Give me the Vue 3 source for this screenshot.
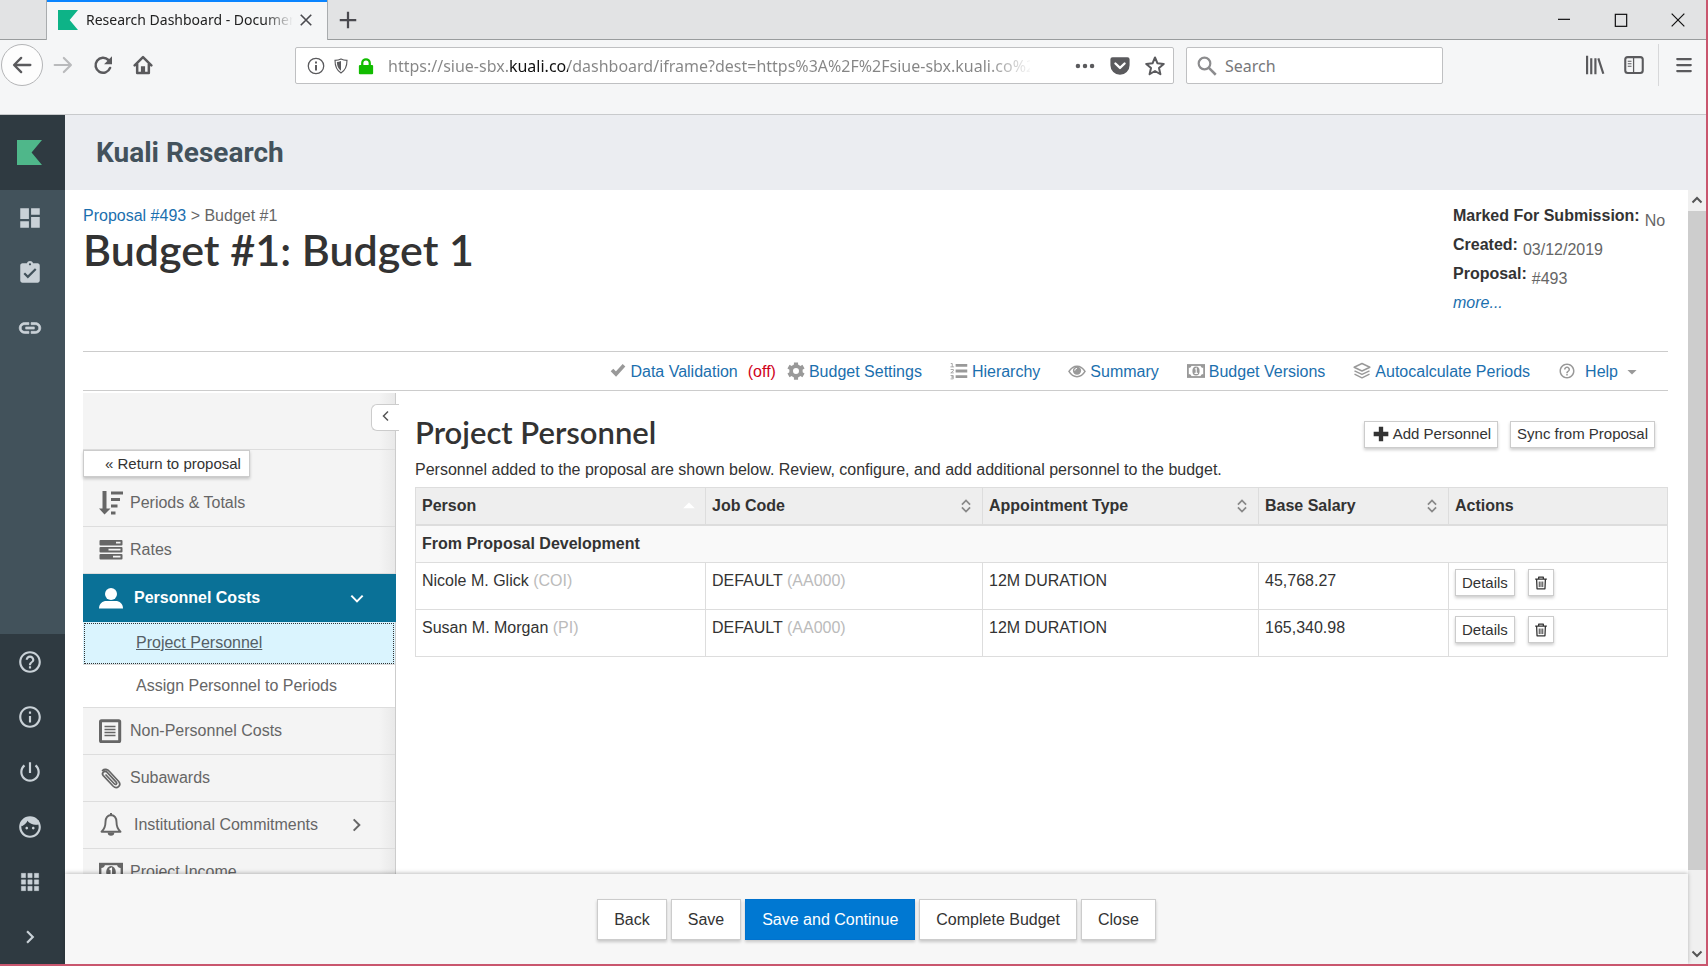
<script setup>
import { h, ref } from "vue";

const shapes = {
  // rail
  dashboard: `<path d="M3 13h8V3H3v10zm0 8h8v-6H3v6zm10 0h8V11h-8v10zm0-18v6h8V3h-8z"/>`,
  tasks: `<path d="M19 3h-4.18C14.4 1.84 13.3 1 12 1c-1.3 0-2.4.84-2.82 2H5c-1.1 0-2 .9-2 2v14c0 1.1.9 2 2 2h14c1.1 0 2-.9 2-2V5c0-1.1-.9-2-2-2zm-7 0c.55 0 1 .45 1 1s-.45 1-1 1-1-.45-1-1 .45-1 1-1zm-2 14l-4-4 1.41-1.41L10 14.17l6.59-6.59L18 9l-8 8z"/>`,
  link: `<path d="M3.9 12c0-1.71 1.39-3.1 3.1-3.1h4V7H7c-2.76 0-5 2.24-5 5s2.24 5 5 5h4v-1.9H7c-1.71 0-3.1-1.39-3.1-3.1zM8 13h8v-2H8v2zm9-6h-4v1.9h4c1.71 0 3.1 1.39 3.1 3.1s-1.39 3.1-3.1 3.1h-4V17h4c2.76 0 5-2.24 5-5s-2.24-5-5-5z" stroke="currentColor" stroke-width=".6"/>`,
  help: `<path d="M11 18h2v-2h-2v2zm1-16C6.48 2 2 6.48 2 12s4.48 10 10 10 10-4.48 10-10S17.52 2 12 2zm0 18c-4.41 0-8-3.59-8-8s3.59-8 8-8 8 3.59 8 8-3.59 8-8 8zm0-14c-2.21 0-4 1.79-4 4h2c0-1.1.9-2 2-2s2 .9 2 2c0 2-3 1.75-3 5h2c0-2.25 3-2.5 3-5 0-2.21-1.79-4-4-4z"/>`,
  info: `<path d="M11 17h2v-6h-2v6zm1-15C6.48 2 2 6.48 2 12s4.48 10 10 10 10-4.48 10-10S17.52 2 12 2zm0 18c-4.41 0-8-3.59-8-8s3.59-8 8-8 8 3.59 8 8-3.59 8-8 8zM11 9h2V7h-2v2z"/>`,
  power: `<path d="M13 3h-2v10h2V3zm4.83 2.17l-1.42 1.42C17.99 7.86 19 9.81 19 12c0 3.87-3.13 7-7 7s-7-3.13-7-7c0-2.19 1.01-4.14 2.58-5.42L6.17 5.17C4.23 6.82 3 9.26 3 12c0 4.97 4.03 9 9 9s9-4.03 9-9c0-2.74-1.23-5.18-3.17-6.83z"/>`,
  face: `<path d="M9 11.75c-.69 0-1.25.56-1.25 1.25s.56 1.25 1.25 1.25 1.25-.56 1.25-1.25-.56-1.25-1.25-1.25zm6 0c-.69 0-1.25.56-1.25 1.25s.56 1.25 1.25 1.25 1.25-.56 1.25-1.25-.56-1.25-1.25-1.25zM12 2C6.48 2 2 6.48 2 12s4.48 10 10 10 10-4.48 10-10S17.52 2 12 2zm0 18c-4.41 0-8-3.59-8-8 0-.29.02-.58.05-.86 2.36-1.05 4.23-2.98 5.21-5.37C11.07 8.33 14.05 10 17.42 10c.78 0 1.53-.09 2.25-.26.21.71.33 1.47.33 2.26 0 4.41-3.59 8-8 8z"/><path d="M4.300 10.500C6 9 7.500 7.500 8.500 4.800l2.500-1 9 2-.500 3.500c-4 .700-7-.500-9.500-3.500-1.500 3-3.300 4.400-5.700 5.400z"/>`,
  apps: `<path d="M4 8h4V4H4v4zm6 12h4v-4h-4v4zm-6 0h4v-4H4v4zm0-6h4v-4H4v4zm6 0h4v-4h-4v4zm6-10v4h4V4h-4zm-6 4h4V4h-4v4zm6 6h4v-4h-4v4zm0 6h4v-4h-4v4z" stroke="currentColor" stroke-width=".4"/>`,
  chevronRight: `<path d="M10 6L8.590 7.410 13.170 12l-4.580 4.590L10 18l6-6z"/>`,
  kuali: `<path d="M0 0h24L14 12l10 12H0z"/>`,

  // browser
  back: `<path d="M22 12H3M11 3.500L2.500 12l8.500 8.500" fill="none" stroke="currentColor" stroke-width="2.800" stroke-linecap="round" stroke-linejoin="round"/>`,
  forward: `<path d="M2 12h19M13 3.500l8.500 8.500-8.500 8.500" fill="none" stroke="currentColor" stroke-width="2.600" stroke-linecap="round" stroke-linejoin="round"/>`,
  reload: `<path d="M20.500 15.500A9 9 0 1 1 18.500 6" fill="none" stroke="currentColor" stroke-width="3" stroke-linecap="round"/><path d="M22.800 1.500v9.500h-9.500z"/>`,
  home: `<path d="M2 12.500L12 2.500l10 10M5 11v10.500h14V11" fill="none" stroke="currentColor" stroke-width="3" stroke-linecap="round" stroke-linejoin="round"/><path d="M9.500 21v-7.500h5V21z"/>`,
  infoThin: `<circle cx="12" cy="12" r="10.300" fill="none" stroke="currentColor" stroke-width="1.700"/><path d="M10.700 10.500h2.600V18h-2.600zM10.700 6h2.600v2.600h-2.600z"/>`,
  shield: `<path d="M12 1.500c3 1.500 6 2 9 2 0 9-2 15-9 19-7-4-9-10-9-19 3 0 6-.500 9-2z" fill="none" stroke="currentColor" stroke-width="1.700"/><path d="M12 4.500v14.500C7.500 16 6 12 5.800 6c2.200-.200 4.200-.700 6.200-1.500z"/>`,
  lock: `<path d="M7 11V8a5 5 0 0 1 10 0v3" fill="none" stroke="currentColor" stroke-width="3"/><rect x="2.500" y="10.500" width="19" height="12.500" rx="1.500"/>`,
  dots: `<circle cx="3.500" cy="12" r="2.700"/><circle cx="12" cy="12" r="2.700"/><circle cx="20.500" cy="12" r="2.700"/>`,
  pocket: `<path d="M3 1.500h18a2.500 2.500 0 0 1 2.500 2.500v7a11.500 11.500 0 0 1-23 0V4A2.500 2.500 0 0 1 3 1.500z"/><path d="M6.500 9l5.500 5.300L17.500 9" fill="none" stroke="#fff" stroke-width="2.800" stroke-linecap="round" stroke-linejoin="round"/>`,
  star: `<path d="M12 1.800l3 7 7.500.700-5.700 5 1.700 7.400-6.500-3.900-6.500 3.900 1.700-7.400-5.700-5 7.500-.700z" fill="none" stroke="currentColor" stroke-width="2.400" stroke-linejoin="round"/>`,
  search: `<circle cx="9" cy="9" r="7" fill="none" stroke="currentColor" stroke-width="2.600"/><path d="M14 14l8.500 8.500" stroke="currentColor" stroke-width="3"/>`,
  library: `<path d="M2.500 1v22M7.500 4v19M12.500 4v19M16 4l6 18.500" fill="none" stroke="currentColor" stroke-width="2.600"/>`,
  sidebar: `<rect x="1.500" y="2.500" width="21" height="19" rx="3" fill="none" stroke="currentColor" stroke-width="2.500"/><path d="M11.500 3v18" stroke="currentColor" stroke-width="1.500"/><path d="M4.500 7.500h4.500M4.500 10.500h4.500M4.500 13.500h4.500" stroke="currentColor" stroke-width="1.300"/>`,
  menu: `<path d="M3 4h18M3 12h18M3 20h18" stroke="currentColor" stroke-width="3" stroke-linecap="round"/>`,
  close: `<path d="M3 3l18 18M21 3L3 21" stroke="currentColor" stroke-width="2.800"/>`,
  plusThin: `<path d="M12 1v22M1 12h22" stroke="currentColor" stroke-width="3"/>`,
  winMin: `<path d="M3 11h18" stroke="currentColor" stroke-width="1.800"/>`,
  winMax: `<rect x="3.500" y="3.500" width="17" height="18" fill="none" stroke="currentColor" stroke-width="1.800"/>`,
  winClose: `<path d="M2.500 2.500l19 19M21.500 2.500l-19 19" stroke="currentColor" stroke-width="1.800"/>`,
  up: `<path d="M3 17l9-9 9 9" fill="none" stroke="currentColor" stroke-width="4"/>`,
  down: `<path d="M3 7l9 9 9-9" fill="none" stroke="currentColor" stroke-width="4"/>`,

  // page actions
  check: `<path d="M3 12l6 6L21 5" fill="none" stroke="currentColor" stroke-width="5.500"/>`,
  gear: `<circle cx="12" cy="12" r="6.500" fill="none" stroke="currentColor" stroke-width="5"/><path d="M12 .500v5M12 18.500v5M2 6.200l4.400 2.600M17.600 15.200l4.400 2.600M2 17.800l4.400-2.600M17.600 8.800l4.400-2.600" stroke="currentColor" stroke-width="5.500"/>`,
  list: `<path d="M7.500 4.500H23M7.500 12H23M7.500 19.500H23" stroke="currentColor" stroke-width="3.800"/><path d="M1 2h2v4.500M.500 6.500h5M.800 10h3.700v1.800L1 14.500h4M.800 18h3.500v2H2h2.300v2.500H.800" fill="none" stroke="currentColor" stroke-width="1.100"/>`,
  eye: `<path d="M1.300 12.500C4 8 7.500 5.500 12 5.500s8 2.500 10.700 7C20 17 16.500 19.500 12 19.500s-8-2.500-10.700-7z" fill="none" stroke="currentColor" stroke-width="2"/><circle cx="12" cy="11.500" r="5.500"/><path d="M9 11.500a3 3 0 0 1 3-3" fill="none" stroke="#fff" stroke-width="1.300"/>`,
  money: `<rect x="1.200" y="4" width="21.600" height="16" fill="none" stroke="currentColor" stroke-width="2.400"/><path d="M1 4h5a4 4 0 0 1-4 4zM23 4h-5a4 4 0 0 0 4 4zM1 20h5a4 4 0 0 0-4-4zM23 20h-5a4 4 0 0 1 4-4z"/><ellipse cx="12" cy="12" rx="4.800" ry="6"/><path d="M10.500 9.500l1.800-1v6.500M10 15.200h4.500" fill="none" stroke="#fff" stroke-width="1.500"/>`,
  layers: `<path d="M12 2l10.500 5L12 12 1.500 7zM2 11.800l10 4.800 10-4.800M2 16.300l10 4.800 10-4.800" fill="none" stroke="currentColor" stroke-width="1.900" stroke-linejoin="round"/>`,
  caret: `<path d="M1 7h22L12 18z"/>`,
  plus: `<path d="M12 1v22M1 12h22" stroke="currentColor" stroke-width="6.500"/>`,
  trash: `<path d="M2 5.500h20M8 5V2h8v3M4.500 6l.700 16h13.600l.700-16" fill="none" stroke="currentColor" stroke-width="2.200" stroke-linejoin="round"/><path d="M9 9.500v9.500M12 9.500v9.500M15 9.500v9.500" stroke="currentColor" stroke-width="1.600"/>`,
  sort: `<path d="M5 9.500L12 2.500l7 7M5 14.500l7 7 7-7" fill="none" stroke="currentColor" stroke-width="3"/>`,
  sortUp: `<path d="M2 16h20L12 6z"/>`,

  // budget menu
  periods: `<path d="M3.500 0h4v17.500h4L5.500 23.500l-5.500-6h3.500zM12 .500h12v3H12zM12 7h9v3h-9zM12 13.500h6.500v3H12zM12 20.500h4.500v3H12z"/>`,
  rates: `<path d="M1.500 2h21a1 1 0 0 1 1 1v3.500a1 1 0 0 1-1 1h-21a1 1 0 0 1-1-1V3a1 1 0 0 1 1-1zM1.500 9h21a1 1 0 0 1 1 1v3.500a1 1 0 0 1-1 1h-21a1 1 0 0 1-1-1V10a1 1 0 0 1 1-1zM1.500 16h21a1 1 0 0 1 1 1v3.500a1 1 0 0 1-1 1h-21a1 1 0 0 1-1-1V17a1 1 0 0 1 1-1z"/><path d="M17 4.700h4.500M9.500 11.700h12M14 18.700h7.500" stroke="#f4f4f4" stroke-width="1.700"/>`,
  person: `<circle cx="12" cy="8" r="6"/><path d="M0 22.500c0-5 3.500-7.500 7.500-7.500h9c4 0 7.500 2.500 7.500 7.500z"/>`,
  document: `<rect x="1.500" y="1.800" width="19.200" height="20.900" rx="1" fill="none" stroke="currentColor" stroke-width="3"/><path d="M5.500 7.500h11M5.500 10.500h11M5.500 13.500h11M5.500 16.500h11" stroke="currentColor" stroke-width="1.600"/>`,
  clip: `<path d="M7 9l8.500 9c1.200 1.200 3-.400 1.900-1.700L8 6.200C5.600 3.800 2 7 4.300 9.600l9.700 10.400c4 3.800 9-.800 5.500-4.800L10.500 5.500C8.500 3.300 5.500 2.500 3.500 4.500" fill="none" stroke="currentColor" stroke-width="1.700" stroke-linecap="round"/>`,
  bell: `<path d="M12 2c-4 .5-5.500 3.500-5.500 7 0 5-1.500 7.500-4 9.700h19c-2.500-2.200-4-4.700-4-9.700 0-3.500-1.500-6.500-5.500-7z" fill="none" stroke="currentColor" stroke-width="1.900" stroke-linejoin="round"/><path d="M11 0h2v3h-2zM8.700 19.500h6.600a3.300 3.300 0 0 1-6.600 0z"/>`,
  open: `<path d="M3.500 8.500L12 17l8.500-8.500" fill="none" stroke="currentColor" stroke-width="3"/>`,
  closed: `<path d="M7 3.500l8.500 8.500L7 20.500" fill="none" stroke="currentColor" stroke-width="3"/>`,
  collapse: `<path d="M16 3l-9 9 9 9" fill="none" stroke="currentColor" stroke-width="3"/>`,
};

const Icon = (props) =>
  h("svg", {
    class: "icon",
    viewBox: "0 0 24 24",
    fill: "currentColor",
    "aria-hidden": "true",
    innerHTML: shapes[props.name],
  });
Icon.props = ["name"];

const url = ref(
  "https://siue-sbx.kuali.co/dashboard/iframe?dest=https%3A%2F%2Fsiue-sbx.kuali.co%2Fkc"
);
const search = ref("");

const railTop = [
  { icon: "dashboard", label: "Dashboard" },
  { icon: "tasks", label: "Action list" },
  { icon: "link", label: "Links" },
];
const railBottom = [
  { icon: "help", label: "Help" },
  { icon: "info", label: "About" },
  { icon: "power", label: "Sign out" },
  { icon: "face", label: "Profile" },
  { icon: "apps", label: "Apps" },
  { icon: "chevronRight", label: "Expand" },
];

const details = [
  { label: "Marked For Submission:", value: "No" },
  { label: "Created:", value: "03/12/2019" },
  { label: "Proposal:", value: "#493" },
];

const actions = [
  { icon: "gear", label: "Budget Settings" },
  { icon: "list", label: "Hierarchy" },
  { icon: "eye", label: "Summary" },
  { icon: "money", label: "Budget Versions" },
  { icon: "layers", label: "Autocalculate Periods" },
];

const menu = [
  { icon: "periods", label: "Periods & Totals" },
  { icon: "rates", label: "Rates" },
  {
    icon: "person",
    label: "Personnel Costs",
    active: true,
    arrow: "open",
    children: ["Project Personnel", "Assign Personnel to Periods"],
  },
  { icon: "document", label: "Non-Personnel Costs" },
  { icon: "clip", label: "Subawards" },
  { icon: "bell", label: "Institutional Commitments", arrow: "closed" },
  { icon: "money", label: "Project Income" },
];
const activeChild = ref("Project Personnel");

const columns = [
  { label: "Person", sort: "sortUp" },
  { label: "Job Code", sort: "sort" },
  { label: "Appointment Type", sort: "sort" },
  { label: "Base Salary", sort: "sort" },
  { label: "Actions" },
];
const people = [
  { name: "Nicole M. Glick", role: "(COI)", salary: "45,768.27" },
  { name: "Susan M. Morgan", role: "(PI)", salary: "165,340.98" },
];

const footer = ["Back", "Save", "Save and Continue", "Complete Budget", "Close"];
</script>

<template>
  <div class="window">
    <div class="tabstrip">
      <div class="tab">
        <Icon name="kuali" class="tab__logo" />
        <span class="tab__title">Research Dashboard - Document</span>
        <button class="plain" aria-label="Close tab"><Icon name="close" class="i-14" /></button>
      </div>
      <button class="plain tabstrip__new" aria-label="New tab"><Icon name="plusThin" class="i-18" /></button>
      <div class="tabstrip__window">
        <button class="plain" aria-label="Minimize"><Icon name="winMin" class="i-16" /></button>
        <button class="plain" aria-label="Maximize"><Icon name="winMax" class="i-16" /></button>
        <button class="plain" aria-label="Close"><Icon name="winClose" class="i-16" /></button>
      </div>
    </div>

    <div class="toolbar">
      <button class="plain toolbar__back" aria-label="Back"><Icon name="back" class="i-20" /></button>
      <button class="plain toolbar__forward" aria-label="Forward"><Icon name="forward" class="i-20" /></button>
      <button class="plain" aria-label="Reload"><Icon name="reload" class="i-20" /></button>
      <button class="plain" aria-label="Home"><Icon name="home" class="i-20" /></button>
      <div class="field field--url">
        <Icon name="infoThin" class="i-18" />
        <Icon name="shield" class="i-16" />
        <Icon name="lock" class="i-18 field__lock" />
        <input v-model="url" class="field__url" type="text" aria-label="Address" />
        <button class="plain" aria-label="Page actions"><Icon name="dots" class="i-20" /></button>
        <button class="plain" aria-label="Pocket"><Icon name="pocket" class="i-20" /></button>
        <button class="plain" aria-label="Bookmark"><Icon name="star" class="i-20" /></button>
      </div>
      <div class="field field--search">
        <Icon name="search" class="i-20 field__glass" />
        <input v-model="search" class="field__search" type="text" placeholder="Search" aria-label="Search" />
      </div>
      <div class="toolbar__end">
        <button class="plain" aria-label="Library"><Icon name="library" class="i-20" /></button>
        <button class="plain" aria-label="Sidebars"><Icon name="sidebar" class="i-20" /></button>
        <button class="plain toolbar__menu" aria-label="Menu"><Icon name="menu" class="i-18" /></button>
      </div>
    </div>

    <div class="app">
      <nav class="rail" aria-label="Kuali">
        <a href="#" class="rail__logo" aria-label="Kuali"><Icon name="kuali" class="rail__mark" /></a>
        <div class="rail__group">
          <a v-for="item in railTop" :key="item.icon" href="#" class="rail__item" :aria-label="item.label">
            <Icon :name="item.icon" class="i-26" />
          </a>
        </div>
        <div class="rail__group rail__group--bottom">
          <a v-for="item in railBottom" :key="item.icon" href="#" class="rail__item" :aria-label="item.label">
            <Icon :name="item.icon" class="i-26" />
          </a>
        </div>
      </nav>

      <div class="shell">
        <header class="shell__header">Kuali Research</header>
        <div class="shell__body">
          <div class="shell__main">
            <div class="page">
              <div class="page__top">
                <div>
                  <div class="crumbs"><a href="#">Proposal #493</a> &gt; Budget #1</div>
                  <h1 class="title">Budget #1: Budget 1</h1>
                </div>
                <div class="details">
                  <div v-for="item in details" :key="item.label" class="details__row">
                    <b>{{ item.label }}</b>
                    <span class="details__value">{{ item.value }}</span>
                  </div>
                  <a href="#" class="details__more">more...</a>
                </div>
              </div>

              <div class="actions">
                <a href="#" class="actions__item actions__item--first">
                  <Icon name="check" class="i-16" />Data Validation
                  <span class="actions__off">(off)</span>
                </a>
                <a v-for="item in actions" :key="item.icon" href="#" class="actions__item">
                  <Icon :name="item.icon" class="i-18" />{{ item.label }}
                </a>
                <a href="#" class="actions__item actions__item--help">
                  <Icon name="help" class="i-18" />Help<Icon name="caret" class="i-10" />
                </a>
              </div>

              <div class="columns">
                <nav class="menu" aria-label="Budget">
                  <div class="menu__head">
                    <button class="menu__collapse" aria-label="Collapse menu"><Icon name="collapse" class="i-12" /></button>
                  </div>
                  <button class="btn menu__return">« Return to proposal</button>
                  <template v-for="item in menu" :key="item.label">
                    <a
                      href="#"
                      class="menu__item"
                      :class="{ 'menu__item--active': item.active, 'menu__item--parent': item.arrow }"
                    >
                      <Icon :name="item.icon" class="i-24" />
                      <span>{{ item.label }}</span>
                      <Icon v-if="item.arrow" :name="item.arrow" class="i-16 menu__arrow" />
                    </a>
                    <a
                      v-for="child in item.children"
                      :key="child"
                      href="#"
                      class="menu__child"
                      :class="{ 'menu__child--active': child === activeChild }"
                      @click.prevent="activeChild = child"
                    >{{ child }}</a>
                  </template>
                </nav>

                <section class="content">
                  <div class="content__head">
                    <h2 class="subtitle">Project Personnel</h2>
                    <div class="content__buttons">
                      <button class="btn btn--add"><Icon name="plus" class="i-16" />Add Personnel</button>
                      <button class="btn">Sync from Proposal</button>
                    </div>
                  </div>
                  <p class="intro">
                    Personnel added to the proposal are shown below. Review, configure, and add additional personnel to the budget.
                  </p>
                  <table class="grid">
                    <colgroup>
                      <col class="grid__person" />
                      <col class="grid__job" />
                      <col class="grid__type" />
                      <col class="grid__salary" />
                      <col />
                    </colgroup>
                    <thead>
                      <tr>
                        <th v-for="col in columns" :key="col.label">
                          <div class="grid__label">
                            {{ col.label }}
                            <Icon v-if="col.sort" :name="col.sort" class="i-14" :class="'grid__' + col.sort" />
                          </div>
                        </th>
                      </tr>
                    </thead>
                    <tbody>
                      <tr class="grid__group">
                        <th colspan="5">From Proposal Development</th>
                      </tr>
                      <tr v-for="person in people" :key="person.name">
                        <td>{{ person.name }} <span class="muted">{{ person.role }}</span></td>
                        <td>DEFAULT <span class="muted">(AA000)</span></td>
                        <td>12M DURATION</td>
                        <td>{{ person.salary }}</td>
                        <td>
                          <div class="grid__actions">
                            <button class="btn">Details</button>
                            <button class="btn btn--icon" aria-label="Delete"><Icon name="trash" class="i-14" /></button>
                          </div>
                        </td>
                      </tr>
                    </tbody>
                  </table>
                </section>
              </div>
            </div>

            <footer class="footer">
              <button
                v-for="label in footer"
                :key="label"
                class="btn btn--large"
                :class="{ 'btn--primary': label === 'Save and Continue' }"
              >{{ label }}</button>
            </footer>
          </div>

          <div class="scrollbar">
            <Icon name="up" class="i-12" />
            <div class="scrollbar__track"><div class="scrollbar__thumb"></div></div>
            <Icon name="down" class="i-12" />
          </div>
        </div>
      </div>
    </div>
  </div>
</template>

<style>
body {
  margin: 0;
}
</style>

<style scoped>
* {
  box-sizing: border-box;
}

.window {
  display: flex;
  flex-direction: column;
  height: 100vh;
  overflow: hidden;
  border: solid #c9566e;
  border-width: 0 2px 2px 0;
  background: #fff;
  color: #333;
  font: 16px/20px "Liberation Sans", Arial, sans-serif;
}

a {
  color: #1b6fae;
  text-decoration: none;
}

.icon {
  display: block;
  flex: none;
}

.i-10 { width: 10px; height: 10px; }
.i-12 { width: 12px; height: 12px; }
.i-14 { width: 14px; height: 14px; }
.i-16 { width: 16px; height: 16px; }
.i-18 { width: 18px; height: 18px; }
.i-20 { width: 20px; height: 20px; }
.i-24 { width: 24px; height: 24px; }
.i-26 { width: 26px; height: 26px; }

.plain {
  display: flex;
  align-items: center;
  justify-content: center;
  padding: 0;
  border: 0;
  background: none;
  color: inherit;
}

/* browser */
.tabstrip {
  display: flex;
  flex: none;
  height: 40px;
  padding-left: 46px;
  background: linear-gradient(#999c9d, #999c9d) bottom / 100% 1px no-repeat #e2e3e4;
  color: #4a4a4f;
}

.tab {
  display: flex;
  align-items: center;
  width: 282px;
  padding: 0 14px 0 11px;
  border: solid #a9acae;
  border-width: 0 1px;
  box-shadow: inset 0 2px #0a84ff;
  background: #f5f6f7;
}

.tab__logo {
  width: 20px;
  height: 20px;
  color: #0db387;
}

.tab__title {
  flex: 1;
  margin: 0 6px 0 8px;
  overflow: hidden;
  white-space: nowrap;
  color: #222;
  font: 14px/20px "Noto Sans", "Open Sans", sans-serif;
  mask-image: linear-gradient(90deg, #000 86%, transparent);
}

.tabstrip__new {
  width: 40px;
}

.tabstrip__window {
  display: flex;
  gap: 41px;
  margin-left: auto;
  padding-right: 20px;
  color: #111;
}

.toolbar {
  display: flex;
  flex: none;
  align-items: flex-start;
  height: 75px;
  border-bottom: 1px solid #c8cacc;
  padding: 4px 0 0 1px;
  background: #f5f6f7;
  color: #5a5a5d;
}

.toolbar > .plain {
  width: 40px;
  height: 42px;
}

.toolbar > .toolbar__back {
  width: 42px;
  border: 1px solid #b4b5b7;
  border-radius: 50%;
  background: #fdfdfd;
}

.toolbar > .toolbar__forward {
  color: #b9babc;
}

.field {
  display: flex;
  align-items: center;
  min-width: 0;
  height: 37px;
  margin-top: 3px;
  border: 1px solid #bfc0c2;
  border-radius: 2px;
  background: #fff;
}

.field input {
  flex: 1;
  min-width: 0;
  padding: 0;
  border: 0;
  outline: 0;
  font: 16px/24px "Noto Sans", "Open Sans", sans-serif;
}

.field--url {
  flex: 1;
  gap: 8px;
  margin-left: 132px;
  padding: 0 8px 0 11px;
}

.field .field__url {
  margin: 0 30px 0 5px;
  background: linear-gradient(90deg, #858585 122px, #111 122px, #111 180px, #858585 180px, #858585 600px, transparent 645px);
  background-clip: text;
  color: transparent;
}

.field--url .plain {
  margin-left: 7px;
}

.field__lock {
  color: #12bc00;
}

.field--search {
  flex: none;
  width: 257px;
  gap: 8px;
  margin-left: 12px;
  padding: 0 10px;
}

.field__glass {
  color: #8c8c8e;
}

.field__search::placeholder {
  color: #77777a;
}

.toolbar__end {
  display: flex;
  height: 42px;
  gap: 19px;
  margin-left: 142px;
  padding-right: 14px;
}

.toolbar__menu {
  width: 34px;
  padding-left: 16px;
  border-left: 1px solid #d7d8da;
  margin-left: -5px;
}

/* kuali shell */
.app {
  display: flex;
  flex: 1;
  min-height: 0;
}

.rail {
  display: flex;
  flex: none;
  flex-direction: column;
  width: 65px;
  background: #42525b;
}

.rail__logo,
.rail__item {
  display: flex;
  align-items: center;
  justify-content: center;
  padding-right: 6px;
  color: #c9d1d7;
}

.rail__logo {
  height: 75px;
  background: #2f3a41;
}

.rail__mark {
  width: 25px;
  height: 27px;
  color: #4fb78a;
}

.rail__item {
  height: 55px;
}

.rail__group--bottom {
  margin-top: auto;
  background: #2f3a41;
}

.shell {
  display: flex;
  flex: 1;
  flex-direction: column;
  min-width: 0;
}

.shell__header {
  flex: none;
  padding: 0 31px;
  background: #ebedf1;
  color: #43525c;
  font: 700 28px/75px Roboto, sans-serif;
}

.shell__body {
  display: flex;
  flex: 1;
  min-height: 0;
}

.shell__main {
  display: flex;
  flex: 1;
  flex-direction: column;
  min-width: 0;
}

.page {
  flex: 1;
  min-height: 0;
  overflow: hidden;
  padding: 16px 20px 0 18px;
}

.page__top {
  display: flex;
  justify-content: space-between;
  height: 145px;
}

.crumbs {
  color: #666;
}

.title,
.subtitle {
  margin: 0;
  font-family: Lato, "Open Sans", sans-serif;
  font-weight: 600;
}

.title {
  font-size: 43px;
  line-height: 48px;
}

.details {
  min-width: 215px;
}

.details__row {
  height: 29px;
  white-space: nowrap;
}

.details__value {
  position: relative;
  top: 5px;
  margin-left: 5px;
  color: #666;
}

.details__more {
  font-style: italic;
}

.actions {
  display: flex;
  justify-content: flex-end;
  gap: 28px;
  padding: 10px 31px 8px 0;
  border: solid #ccc;
  border-width: 1px 0;
  white-space: nowrap;
}

.actions__item {
  display: flex;
  gap: 4px;
}

.actions__item--first {
  margin-right: -17px;
}

.actions__item--help {
  gap: 9px;
}

.actions .icon {
  color: #999;
}

.actions .i-10 {
  align-self: center;
}

.actions__off {
  margin-left: 6px;
  color: #d0021b;
}

.columns {
  display: flex;
  margin-top: 2px;
}

.menu {
  flex: none;
  width: 313px;
  border-right: 1px solid #ccc;
  background: linear-gradient(270deg, #e9e9e9, #f4f4f4 16px);
}

.menu__head {
  height: 57px;
  padding-top: 11px;
  border-bottom: 1px solid #ddd;
}

.menu__collapse {
  position: relative;
  left: 4px;
  display: block;
  width: 28px;
  height: 27px;
  margin-left: auto;
  padding: 0 0 4px 8px;
  border: 1px solid #ccc;
  border-right: 0;
  border-radius: 6px 0 0 6px;
  background: #fff;
  color: #555;
}

.btn {
  display: flex;
  align-items: center;
  height: 27px;
  padding: 0 6px;
  border: 1px solid #ccc;
  border-radius: 0;
  box-shadow: 0 2px 3px rgba(0, 0, 0, 0.2);
  background: #fff;
  color: #333;
  font: 15px/20px "Liberation Sans", Arial, sans-serif;
  white-space: nowrap;
}

.menu__return {
  margin-bottom: 3px;
  padding: 0 8px 0 21px;
}

.menu__item {
  display: flex;
  align-items: center;
  gap: 7px;
  height: 47px;
  padding: 0 30px 0 16px;
  border-bottom: 1px solid #ddd;
  color: #666;
}

.menu__item--parent {
  gap: 11px;
}

.menu__item--active {
  height: 48px;
  border-bottom: 0;
  margin-right: -1px;
  padding-right: 31px;
  background: #0a7197;
  color: #fff;
  font-weight: 700;
}

.menu__arrow {
  margin-left: auto;
}

.menu__child {
  display: block;
  height: 43px;
  padding: 11px 0 0 53px;
  border-bottom: 1px solid #ddd;
  background: #fff;
  color: #666;
}

.menu__child--active {
  outline: 1px dotted #333;
  outline-offset: -2px;
  background: #daf4fe;
  color: #555f66;
  text-decoration: underline;
}

.content {
  flex: 1;
  min-width: 0;
  padding: 21px 0 0 19px;
}

.content__head {
  display: flex;
  align-items: center;
  justify-content: space-between;
}

.subtitle {
  font-size: 31px;
  line-height: 36px;
}

.content__buttons {
  display: flex;
  gap: 12px;
  padding: 4px 13px 0 0;
}

.btn--add {
  gap: 4px;
  padding-left: 8px;
}

.btn--icon {
  padding: 0 5px;
}

.intro {
  margin: 10px 0 7px;
}

.grid {
  width: 100%;
  border-collapse: collapse;
  table-layout: fixed;
}

.grid__person { width: 290px; }
.grid__job { width: 277px; }
.grid__type { width: 276px; }
.grid__salary { width: 190px; }

.grid th,
.grid td {
  padding: 8px 6px;
  border: 1px solid #ddd;
  text-align: left;
  vertical-align: top;
}

.grid thead th {
  border-bottom-width: 2px;
  background: #eee;
}

.grid__label {
  display: flex;
  align-items: center;
  justify-content: space-between;
  padding-right: 3px;
}

.grid__sort {
  color: #888;
}

.grid__sortUp {
  color: #fff;
}

.grid__group th {
  background: #f9f9f9;
}

.grid td:last-child {
  padding: 6px 6px 13px;
}

.grid__actions {
  display: flex;
  gap: 13px;
}

.muted {
  color: #bbb;
}

.footer {
  position: relative;
  display: flex;
  flex: none;
  justify-content: center;
  gap: 4px;
  padding: 25px 0 24px;
  box-shadow: 0 -1px 4px rgba(0, 0, 0, 0.25);
  background: #f7f7f7;
}

.btn--large {
  height: 41px;
  padding: 0 16px;
  font-size: 16px;
}

.btn--primary {
  border-color: #0072ce;
  background: #0078d2;
  color: #fff;
}

.scrollbar {
  display: flex;
  flex: none;
  flex-direction: column;
  align-items: center;
  gap: 5px;
  width: 18px;
  padding: 4px 0;
  background: #f0f0f0;
  color: #555;
}

.scrollbar__track {
  flex: 1;
  width: 100%;
}

.scrollbar__thumb {
  height: 90%;
  background: #cdcdcd;
}
</style>
